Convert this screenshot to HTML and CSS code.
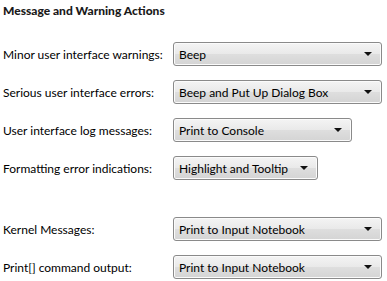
FILE: index.html
```html
<!DOCTYPE html>
<html lang="en">
<head>
    <meta charset="UTF-8">
    <title>Message and Warning Actions</title>
    <link rel="stylesheet" href="styles.css">
</head>
<body>
    <div class="panel">
        <h1>Message and Warning Actions</h1>
        <div class="group">
            <div class="row">
                <span class="label">Minor user interface warnings:</span>
                <div class="dropdown wide">Beep<span class="arrow"></span></div>
            </div>
            <div class="row">
                <span class="label">Serious user interface errors:</span>
                <div class="dropdown wide">Beep and Put Up Dialog Box<span class="arrow"></span></div>
            </div>
            <div class="row">
                <span class="label">User interface log messages:</span>
                <div class="dropdown mid">Print to Console<span class="arrow"></span></div>
            </div>
            <div class="row">
                <span class="label">Formatting error indications:</span>
                <div class="dropdown narrow">Highlight and Tooltip<span class="arrow"></span></div>
            </div>
        </div>
        <div class="group second">
            <div class="row">
                <span class="label">Kernel Messages:</span>
                <div class="dropdown wide">Print to Input Notebook<span class="arrow"></span></div>
            </div>
            <div class="row">
                <span class="label">Print[] command output:</span>
                <div class="dropdown wide">Print to Input Notebook<span class="arrow"></span></div>
            </div>
        </div>
    </div>
</body>
</html>
```

FILE: styles.css
```css
body {
    margin: 0;
    background: #ffffff;
    font-family: Lato, "Noto Sans", sans-serif;
    font-size: 12px;
    color: #000000;
}
.panel {
    padding: 3px 0 0 3px;
}
h1 {
    margin: 0;
    font-size: 12px;
    font-weight: 900;
    line-height: 16px;
    color: #1a1a1a;
}
.group {
    display: flex;
    flex-direction: column;
    gap: 14px;
    margin-top: 23px;
}
.group.second {
    margin-top: 37px;
}
.row {
    display: flex;
    align-items: center;
    height: 24px;
}
.label {
    width: 170px;
    flex: none;
    white-space: nowrap;
}
.dropdown {
    box-sizing: border-box;
    height: 24px;
    padding: 0 0 0 5px;
    display: flex;
    align-items: center;
    justify-content: space-between;
    white-space: nowrap;
    border: 1px solid #8a8a8a;
    border-radius: 3px;
    background: linear-gradient(#f4f4f4, #e9e9e9 50%, #dedede 51%, #d4d4d4);
    box-shadow: inset 0 0 0 1px #fbfbfb;
}
.wide {
    width: 209px;
}
.mid {
    width: 179px;
}
.narrow {
    width: 145px;
}
.arrow {
    width: 0;
    height: 0;
    margin-right: 9px;
    border-left: 4px solid transparent;
    border-right: 4px solid transparent;
    border-top: 4px solid #111111;
}
```
